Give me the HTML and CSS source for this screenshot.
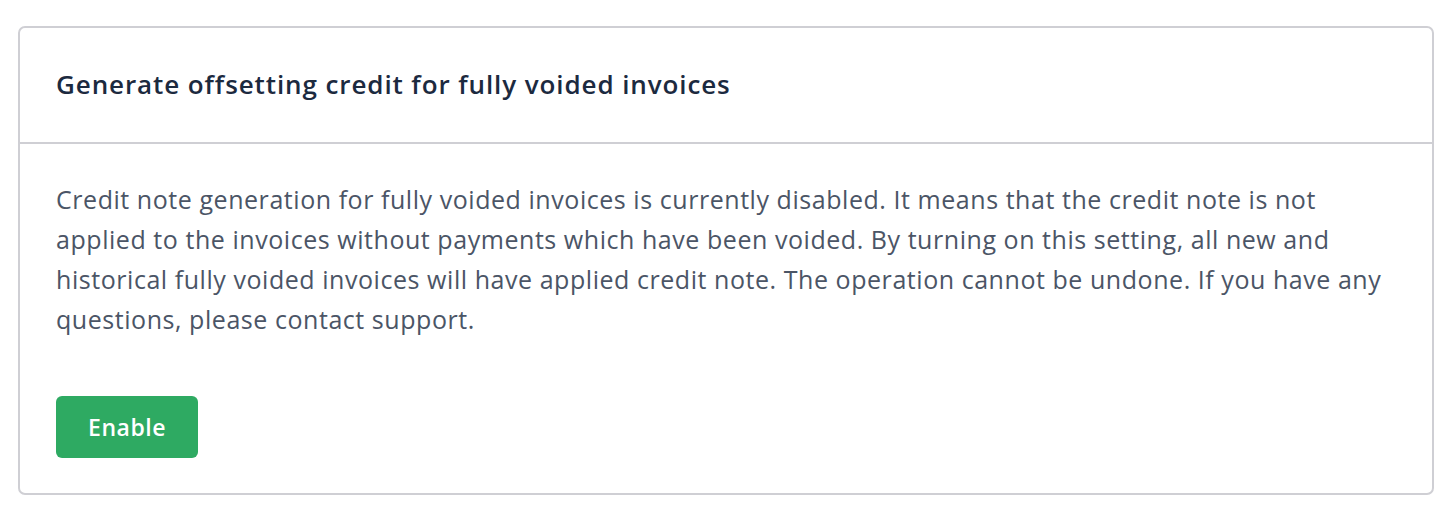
FILE: index.html
```html
<!DOCTYPE html>
<html lang="en">
<head>
  <meta charset="UTF-8">
  <meta name="viewport" content="width=device-width, initial-scale=1.0">
  <link rel="stylesheet" href="styles.css">
  <title>Credit note settings</title>
</head>
<body>
  <!-- settings card -->
  <div class="card">
    <div class="card-header">
      <h2 class="title">Generate offsetting credit for fully voided invoices</h2>
    </div>
    <div class="card-body">
      <p class="text">Credit note generation for fully voided invoices is currently disabled. It means that the credit note is not applied to the invoices without payments which have been voided. By turning on this setting, all new and historical fully voided invoices will have applied credit note. The operation cannot be undone. If you have any questions, please contact support.</p>
      <button class="btn" type="button">Enable</button>
    </div>
  </div>
</body>
</html>
```

FILE: styles.css
```css
body {
  margin: 0;
  padding: 26px 20px 0 18px;
  background: #ffffff;
  font-family: "Open Sans", "Lato", sans-serif;
}

.card {
  border: 2px solid #cfcfd4;
  border-radius: 7px;
  background: #ffffff;
}

.card-header {
  padding: 37px 36px 39px;
  border-bottom: 2px solid #cfcfd4;
}

.title {
  margin: 0;
  font-size: 26px;
  line-height: 38px;
  font-weight: 600;
  letter-spacing: 0.9px;
  color: #1c2a3f;
}

.card-body {
  padding: 35px 36px 35px;
}

.text {
  max-width: 1330px;
  margin: 0 0 57px;
  font-size: 25px;
  line-height: 40px;
  letter-spacing: 0.55px;
  color: #4b5566;
}

.btn {
  display: block;
  width: 142px;
  height: 62px;
  border: none;
  border-radius: 6px;
  background: #2eaa62;
  color: #ffffff;
  font-family: inherit;
  font-size: 23px;
  font-weight: 600;
  letter-spacing: 0.5px;
  cursor: pointer;
}
```
